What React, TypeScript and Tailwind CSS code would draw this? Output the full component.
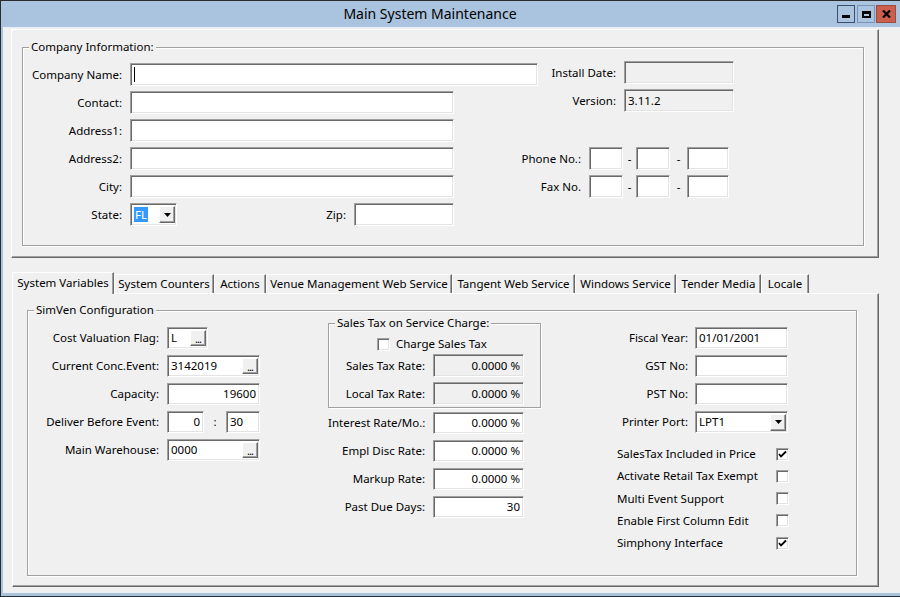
import React from "react";

const sunken =
  "box-border border border-t-[#a0a0a0] border-l-[#a0a0a0] border-r-white border-b-white shadow-[inset_1px_1px_0_#696969,inset_-1px_-1px_0_#e3e3e3]";
const raised =
  "box-border border border-t-white border-l-white border-r-[#696969] border-b-[#696969] shadow-[inset_-1px_-1px_0_#a0a0a0]";
const etched =
  "box-border border border-[#a0a0a0] shadow-[1px_1px_0_#ffffff,inset_1px_1px_0_#ffffff]";

function Box({
  w,
  h = "h-[23px]",
  bg = "bg-white",
  align = "justify-start",
  children,
}: {
  w: string;
  h?: string;
  bg?: string;
  align?: string;
  children?: React.ReactNode;
}) {
  return (
    <div className={`${sunken} ${w} ${h} ${bg} flex items-center ${align} px-[3px] overflow-hidden whitespace-nowrap`}>
      {children}
    </div>
  );
}

function GroupBox({
  label,
  className,
  children,
}: {
  label: string;
  className: string;
  children?: React.ReactNode;
}) {
  return (
    <div className={`relative ${etched} ${className}`}>
      <span className="absolute left-[6px] -top-[9px] bg-[#f0f0f0] px-[2px] leading-[16px] whitespace-nowrap">
        {label}
      </span>
      {children}
    </div>
  );
}

function DotsButton() {
  return (
    <div className={`${raised} bg-[#f0f0f0] w-[16px] h-[16px] ml-auto -mr-[2px] flex items-end justify-center text-[11px] leading-[11px] pb-[1px] tracking-[-1px]`}>
      ...
    </div>
  );
}

function DropButton() {
  return (
    <div className={`${raised} bg-[#f0f0f0] w-[16px] h-[17px] ml-auto -mr-[2px] flex items-center justify-center`}>
      <svg width="7" height="4" viewBox="0 0 7 4">
        <path d="M0 0H7L3.5 4Z" fill="#000" />
      </svg>
    </div>
  );
}

function Check({ checked }: { checked?: boolean }) {
  return (
    <div className={`${sunken} bg-white w-[13px] h-[13px] flex items-center justify-center`}>
      {checked && (
        <svg width="9" height="9" viewBox="0 0 9 9">
          <path d="M1 4 L3 6.5 L8 1.5" stroke="#000" strokeWidth="1.8" fill="none" />
        </svg>
      )}
    </div>
  );
}

function Tab({ w, label, selected }: { w: string; label: string; selected?: boolean }) {
  if (selected) {
    return (
      <div
        className={`${w} h-[22px] -mb-[1px] relative z-10 bg-[#f0f0f0] border-t border-l border-white border-r border-r-[#696969] shadow-[inset_-1px_0_0_#a0a0a0] flex items-center justify-center pb-[2px] whitespace-nowrap`}
      >
        {label}
      </div>
    );
  }
  return (
    <div
      className={`${w} h-[19px] mt-[2px] bg-[#f0f0f0] border-t border-l border-white border-r border-r-[#696969] shadow-[inset_-1px_0_0_#a0a0a0] flex items-center justify-center whitespace-nowrap`}
    >
      {label}
    </div>
  );
}

function Row({ label, lw, children }: { label: string; lw: string; children?: React.ReactNode }) {
  return (
    <div className="flex items-center h-[23px]">
      <div className={`${lw} text-right mr-[8px] whitespace-nowrap`}>{label}</div>
      {children}
    </div>
  );
}

export default function App() {
  return (
    <div className="w-[900px] h-[597px] bg-[#2b2b2b] pt-[1px] pl-[1px] pb-[1px] font-['Noto_Sans',sans-serif] text-[11.5px] leading-[16px] text-black overflow-hidden">
      <div className="h-full bg-[#aac3de] flex flex-col">
        {/* Title bar */}
        <div className="h-[26px] flex items-center shrink-0">
          <div className="flex-1 text-center pl-[22px] text-[14px] leading-[20px]">Main System Maintenance</div>
          <div className="flex items-center mr-[4px]">
            <div className="w-[18px] h-[18px] border border-[#3c4e6a] bg-[#aac3de] flex items-end justify-center pb-[4px]">
              <div className="w-[8px] h-[3px] bg-black" />
            </div>
            <div className="w-[18px] h-[18px] ml-[2px] border border-[#7a94b8] bg-[#aac3de] flex items-center justify-center">
              <div className="w-[9px] h-[7px] border-2 border-t-[3px] border-black" />
            </div>
            <div className="w-[20px] h-[18px] ml-[1px] border border-[#9a4a3e] bg-[#cc5f4c] flex items-center justify-center">
              <svg width="9" height="8" viewBox="0 0 9 8">
                <path d="M1 0.5L8 7.5M8 0.5L1 7.5" stroke="#000" strokeWidth="2.2" />
              </svg>
            </div>
          </div>
        </div>

        {/* Client area */}
        <div className="flex-1 ml-[2px] mb-[3px] bg-[#f0f0f0] border-t border-t-[#e8eef5] pt-[1px]">
          {/* Company panel */}
          <div className={`${raised} ml-[8px] w-[868px] h-[229px] pl-[10px] pt-[17px]`}>
            <GroupBox label="Company Information:" className="w-[842px] h-[199px] pt-[15px]">
              <div className="flex flex-col gap-[5px]">
                <Row label="Company Name:" lw="w-[99px]">
                  <Box w="w-[408px]">
                    <div className="w-[1px] h-[15px] bg-black" />
                  </Box>
                  <div className="flex items-center mb-[4px]">
                    <div className="w-[78px] text-right mr-[8px] whitespace-nowrap">Install Date:</div>
                    <Box w="w-[110px]" bg="bg-[#f0f0f0]" />
                  </div>
                </Row>
                <Row label="Contact:" lw="w-[99px]">
                  <Box w="w-[324px]" />
                  <div className="flex items-center mb-[4px]">
                    <div className="w-[162px] text-right mr-[8px] whitespace-nowrap">Version:</div>
                    <Box w="w-[110px]" bg="bg-[#f0f0f0]">3.11.2</Box>
                  </div>
                </Row>
                <Row label="Address1:" lw="w-[99px]">
                  <Box w="w-[324px]" />
                </Row>
                <Row label="Address2:" lw="w-[99px]">
                  <Box w="w-[324px]" />
                  <div className="w-[127px] text-right mr-[8px] whitespace-nowrap">Phone No.:</div>
                  <Box w="w-[34px]" />
                  <div className="w-[13px] text-center">-</div>
                  <Box w="w-[34px]" />
                  <div className="w-[17px] text-center">-</div>
                  <Box w="w-[42px]" />
                </Row>
                <Row label="City:" lw="w-[99px]">
                  <Box w="w-[324px]" />
                  <div className="w-[127px] text-right mr-[8px] whitespace-nowrap">Fax No.</div>
                  <Box w="w-[34px]" />
                  <div className="w-[13px] text-center">-</div>
                  <Box w="w-[34px]" />
                  <div className="w-[17px] text-center">-</div>
                  <Box w="w-[42px]" />
                </Row>
                <Row label="State:" lw="w-[99px]">
                  <Box w="w-[47px]">
                    <span className="bg-[#3399ff] text-white px-[1px] leading-[15px]">FL</span>
                    <DropButton />
                  </Box>
                  <div className="w-[169px] text-right mr-[8px] whitespace-nowrap">Zip:</div>
                  <Box w="w-[100px]" />
                </Row>
              </div>
            </GroupBox>
          </div>

          {/* Tabs */}
          <div className="ml-[9px] mt-[14px] flex h-[21px] items-start">
            <Tab w="w-[102px]" label="System Variables" selected />
            <Tab w="w-[100px]" label="System Counters" />
            <Tab w="w-[52px]" label="Actions" />
            <Tab w="w-[186px]" label="Venue Management Web Service" />
            <Tab w="w-[123px]" label="Tangent Web Service" />
            <Tab w="w-[101px]" label="Windows Service" />
            <Tab w="w-[85px]" label="Tender Media" />
            <Tab w="w-[48px]" label="Locale" />
          </div>
          <div className={`${raised} ml-[9px] w-[867px] h-[294px] pl-[14px] pt-[16px]`}>
            <GroupBox label="SimVen Configuration" className="w-[830px] h-[266px]">
              <div className="flex items-start">
                {/* Column 1 */}
                <div className="w-[300px] pt-[16px] flex flex-col gap-[6px]">
                  {[
                    { l: "Cost Valuation Flag:", c: <Box w="w-[41px]" h="h-[22px]">L<DotsButton /></Box> },
                    { l: "Current Conc.Event:", c: <Box w="w-[93px]" h="h-[22px]">3142019<DotsButton /></Box> },
                    { l: "Capacity:", c: <Box w="w-[93px]" h="h-[22px]" align="justify-end">19600</Box> },
                    {
                      l: "Deliver Before Event:",
                      c: (
                        <>
                          <Box w="w-[37px]" h="h-[22px]" align="justify-end">0</Box>
                          <div className="w-[22px] text-center">:</div>
                          <Box w="w-[34px]" h="h-[22px]">30</Box>
                        </>
                      ),
                    },
                    { l: "Main Warehouse:", c: <Box w="w-[93px]" h="h-[22px]">0000<DotsButton /></Box> },
                  ].map((r) => (
                    <div key={r.l} className="flex items-center h-[22px]">
                      <div className="w-[131px] text-right mr-[8px] whitespace-nowrap">{r.l}</div>
                      {r.c}
                    </div>
                  ))}
                </div>

                {/* Column 2 */}
                <div className="w-[213px] pt-[12px]">
                  <GroupBox label="Sales Tax on Service Charge:" className="w-[213px] h-[85px] pt-[12px]">
                    <div className="flex items-center h-[16px] pl-[48px]">
                      <Check />
                      <span className="ml-[6px]">Charge Sales Tax</span>
                    </div>
                    <div className="mt-[2px] flex flex-col gap-[5px]">
                      <Row label="Sales Tax Rate:" lw="w-[96px]">
                        <Box w="w-[91px]" bg="bg-[#f0f0f0]" align="justify-end">0.0000 %</Box>
                      </Row>
                      <Row label="Local Tax Rate:" lw="w-[96px]">
                        <Box w="w-[91px]" bg="bg-[#f0f0f0]" align="justify-end">0.0000 %</Box>
                      </Row>
                    </div>
                  </GroupBox>
                  <div className="mt-[4px] flex flex-col gap-[6px]">
                    {[
                      ["Interest Rate/Mo.:", "0.0000 %"],
                      ["Empl Disc Rate:", "0.0000 %"],
                      ["Markup Rate:", "0.0000 %"],
                      ["Past Due Days:", "30"],
                    ].map(([l, v]) => (
                      <div key={l} className="flex items-center h-[22px]">
                        <div className="w-[97px] text-right mr-[8px] whitespace-nowrap">{l}</div>
                        <Box w="w-[91px]" h="h-[22px]" align="justify-end">{v}</Box>
                      </div>
                    ))}
                  </div>
                </div>

                {/* Column 3 */}
                <div className="ml-[76px] pt-[16px] flex flex-col">
                  <div className="flex flex-col gap-[6px]">
                    {["Fiscal Year:", "GST No:", "PST No:", "Printer Port:"].map((l) => (
                      <div key={l} className="flex items-center h-[22px]">
                        <div className="w-[71px] text-right mr-[7px] whitespace-nowrap">{l}</div>
                        {l === "Printer Port:" ? (
                          <Box w="w-[93px]" h="h-[22px]">
                            LPT1
                            <DropButton />
                          </Box>
                        ) : (
                          <Box w="w-[93px]" h="h-[22px]">{l === "Fiscal Year:" ? "01/01/2001" : ""}</Box>
                        )}
                      </div>
                    ))}
                  </div>
                  <div className="mt-[10px] flex flex-col">
                    {[
                      ["SalesTax Included in Price", true],
                      ["Activate Retail Tax Exempt", false],
                      ["Multi Event Support", false],
                      ["Enable First Column Edit", false],
                      ["Simphony Interface", true],
                    ].map(([l, c]) => (
                      <div key={l as string} className="flex items-center justify-between w-[172px] h-[22.25px]">
                        <span className="whitespace-nowrap">{l as string}</span>
                        <Check checked={c as boolean} />
                      </div>
                    ))}
                  </div>
                </div>
              </div>
            </GroupBox>
          </div>
        </div>
      </div>
    </div>
  );
}
